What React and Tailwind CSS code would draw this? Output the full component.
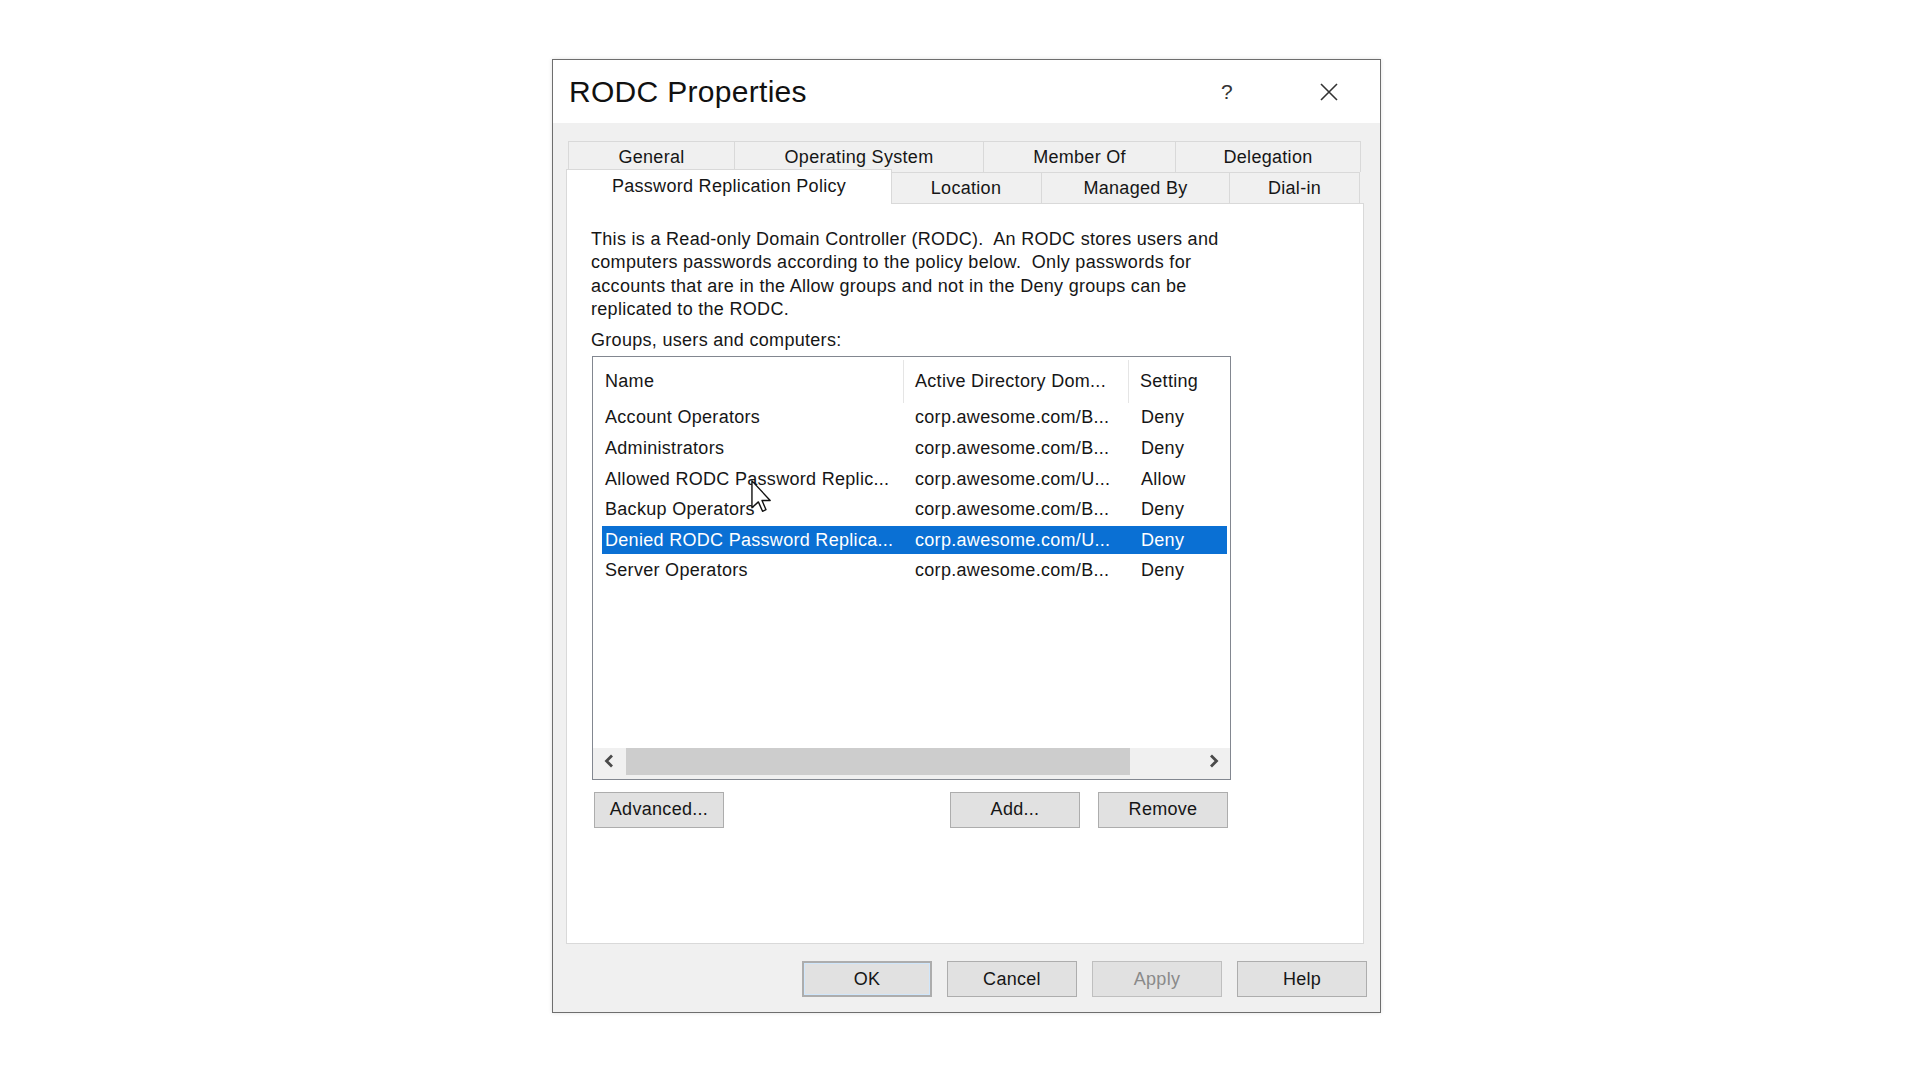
import React from "react";

const rows = [
  { name: "Account Operators", domain: "corp.awesome.com/B...", setting: "Deny" },
  { name: "Administrators", domain: "corp.awesome.com/B...", setting: "Deny" },
  { name: "Allowed RODC Password Replic...", domain: "corp.awesome.com/U...", setting: "Allow" },
  { name: "Backup Operators", domain: "corp.awesome.com/B...", setting: "Deny" },
  { name: "Denied RODC Password Replica...", domain: "corp.awesome.com/U...", setting: "Deny", selected: true },
  { name: "Server Operators", domain: "corp.awesome.com/B...", setting: "Deny" },
];

function Tab({ label, w, selected }) {
  if (selected) {
    return (
      <div className={`relative z-10 -mb-px flex h-[35px] ${w} items-start justify-center border-x border-t border-[#d9d9d9] bg-white pt-[3px]`}>
        {label}
      </div>
    );
  }
  return (
    <div className={`-ml-px flex h-[31px] ${w} items-center justify-center border border-b-0 border-[#d9d9d9] bg-[#f0f0f0] pt-px`}>
      {label}
    </div>
  );
}

function Button({ children, className = "" }) {
  return (
    <button className={`flex h-[36px] w-[130px] items-center justify-center border border-[#adadad] bg-[#e1e1e1] text-[18px] ${className}`}>
      {children}
    </button>
  );
}

function Cursor() {
  return (
    <svg className="absolute left-[158px] top-[123px] z-20" width="21" height="33" viewBox="0 0 12 19">
      <path d="M0.5 0.5 L0.5 16 L4.2 12.6 L6.6 18 L8.6 17.1 L6.3 11.8 L11 11.8 Z" fill="#fff" stroke="#111" strokeWidth="0.8" strokeLinejoin="round" />
    </svg>
  );
}

export default function App() {
  return (
    <div className="min-h-[1080px] w-full bg-white pl-[552px] pt-[59px] font-['Liberation_Sans',Arial,sans-serif] text-[18px] tracking-[0.3px] text-[#161616]">
      <div className="flex h-[954px] w-[829px] flex-col border border-[#6e6e6e] bg-[#f0f0f0] shadow-[0_0_4px_rgba(0,0,0,0.12)]">
        {/* title bar */}
        <div className="flex h-[63px] shrink-0 items-center bg-white pl-[16px]">
          <span className="text-[30px] tracking-[0.3px] text-[#111]">RODC Properties</span>
          <span className="ml-auto w-[14px] text-center text-[21px] text-[#333]">?</span>
          <div className="ml-[86px] mr-[42px] flex w-[18px] items-center">
            <svg width="18" height="18" viewBox="0 0 18 18">
              <path d="M1 1 L17 17 M17 1 L1 17" stroke="#333" strokeWidth="1.6" />
            </svg>
          </div>
        </div>

        {/* body */}
        <div className="flex flex-1 flex-col pl-[13px] pr-[13px] pt-[18px]">
          {/* tab row 1 */}
          <div className="ml-[3px] flex">
            <Tab label="General" w="w-[167px]" />
            <Tab label="Operating System" w="w-[250px]" />
            <Tab label="Member Of" w="w-[193px]" />
            <Tab label="Delegation" w="w-[186px]" />
          </div>
          {/* tab row 2 */}
          <div className="flex h-[31px] items-end">
            <Tab label="Password Replication Policy" w="w-[326px]" selected />
            <div className="-ml-px flex items-end">
              <Tab label="Location" w="w-[152px]" />
              <Tab label="Managed By" w="w-[189px]" />
              <Tab label="Dial-in" w="w-[131px]" />
            </div>
          </div>

          {/* panel */}
          <div className="mr-[3px] flex h-[741px] flex-col border border-[#d9d9d9] bg-white pl-[24px] pt-[24px]">
            <div className="whitespace-pre leading-[23.4px]">
              <div>This is a Read-only Domain Controller (RODC).  An RODC stores users and</div>
              <div>computers passwords according to the policy below.  Only passwords for</div>
              <div>accounts that are in the Allow groups and not in the Deny groups can be</div>
              <div>replicated to the RODC.</div>
            </div>
            <div className="mt-[7px] leading-[23px]">Groups, users and computers:</div>

            {/* list view */}
            <div className="relative ml-px mt-[4px] flex h-[424px] w-[639px] flex-col border border-[#828790] bg-white">
              <div className="ml-[9px] flex h-[46px] items-center pt-[3px]">
                <div className="flex h-full w-[302px] items-center border-r border-[#e5e5e5] pl-[3px]">Name</div>
                <div className="flex h-full w-[225px] items-center border-r border-[#e5e5e5] pl-[11px]">Active Directory Dom...</div>
                <div className="flex h-full items-center pl-[11px]">Setting</div>
              </div>
              {rows.map((r) => (
                <div key={r.name} className="ml-[9px] mr-[3px] flex h-[30.6px] items-center">
                  <div className={`flex h-[28px] w-full items-center ${r.selected ? "bg-[#0a70d4] text-white" : ""}`}>
                    <div className="w-[302px] whitespace-nowrap pl-[3px]">{r.name}</div>
                    <div className="w-[225px] whitespace-nowrap pl-[11px]">{r.domain}</div>
                    <div className="pl-[12px]">{r.setting}</div>
                  </div>
                </div>
              ))}
              <div className="flex-1" />
              {/* horizontal scrollbar */}
              <div className="flex h-[31px] items-start bg-[#f0f0f0]">
                <div className="flex h-[27px] w-[32px] items-center justify-center">
                  <svg width="10" height="14" viewBox="0 0 10 14">
                    <path d="M8 1.5 L2.5 7 L8 12.5" fill="none" stroke="#4a4a4a" strokeWidth="2.8" />
                  </svg>
                </div>
                <div className="ml-px h-[27px] w-[504px] bg-[#cdcdcd]" />
                <div className="flex-1" />
                <div className="flex h-[27px] w-[32px] items-center justify-center">
                  <svg width="10" height="14" viewBox="0 0 10 14">
                    <path d="M2 1.5 L7.5 7 L2 12.5" fill="none" stroke="#4a4a4a" strokeWidth="2.8" />
                  </svg>
                </div>
              </div>
              <Cursor />
            </div>

            {/* buttons below list */}
            <div className="ml-px mt-[12px] flex w-[639px]">
              <Button className="ml-[2px]">Advanced...</Button>
              <Button className="ml-auto">Add...</Button>
              <Button className="ml-[18px] mr-[3px]">Remove</Button>
            </div>
          </div>

          {/* dialog buttons */}
          <div className="mt-[17px] flex justify-end gap-[15px]">
            <Button className="w-[129px] border-2 border-[#0062c4] shadow-[inset_0_0_0_1px_#cfe6fb]">OK</Button>
            <Button className="w-[129px]">Cancel</Button>
            <Button className="w-[129px] border-[#bfbfbf] bg-[#cccccc] text-[#8a8a8a]">Apply</Button>
            <Button className="w-[129px]">Help</Button>
          </div>
        </div>
      </div>
    </div>
  );
}
